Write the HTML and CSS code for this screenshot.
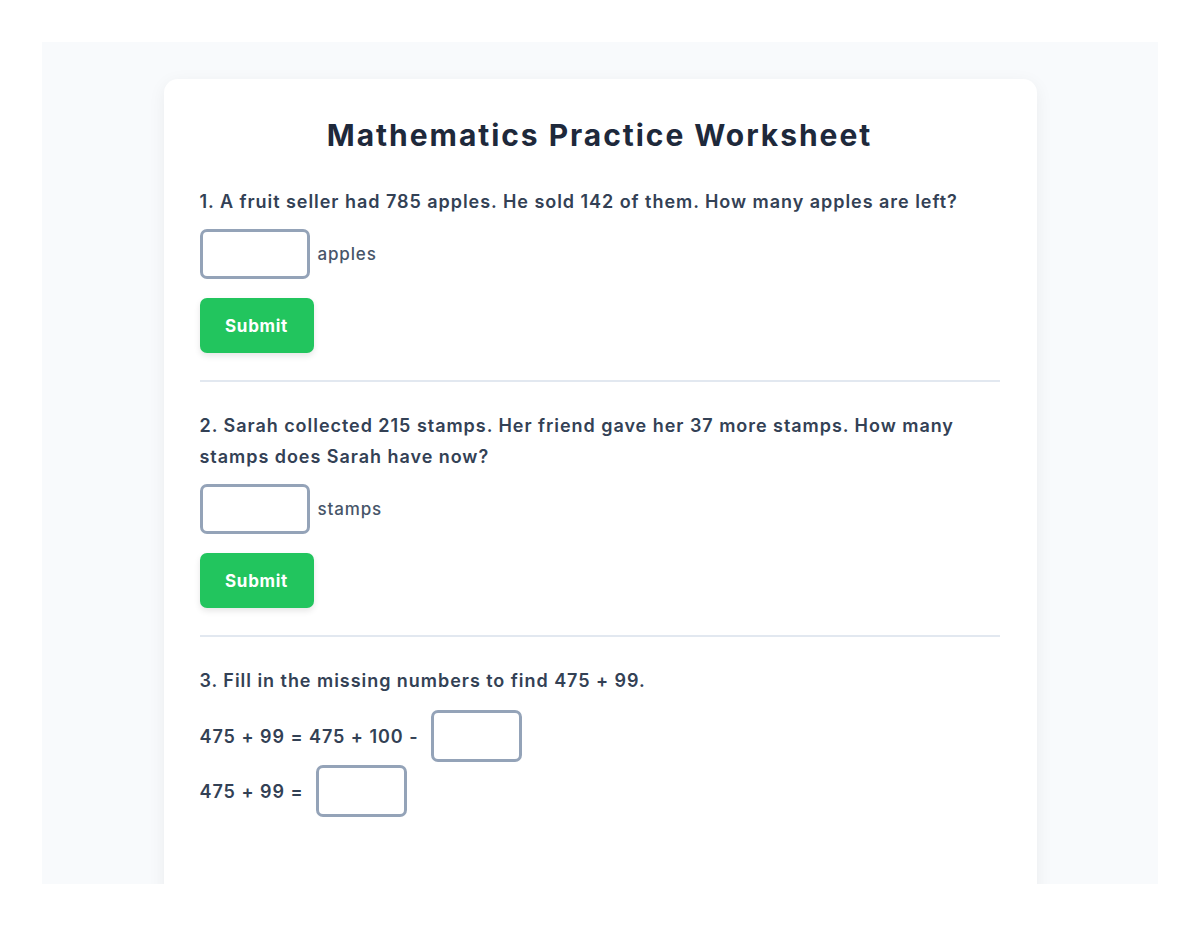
FILE: index.html
```html
<!DOCTYPE html>
<html lang="en">
<head>
  <meta charset="UTF-8">
  <meta name="viewport" content="width=device-width, initial-scale=1.0"/>
  <title>Mathematics Practice Worksheet</title>
  <link rel="stylesheet" href="styles.css">
</head>
<body>
  <div class="frame">
    <main class="worksheet">
      <h1>Mathematics Practice Worksheet</h1>

      <!-- Question 1 -->
      <section class="question">
        <p class="prompt">1. A fruit seller had 785 apples. He sold 142 of them. How many apples are left?</p>
        <div class="answer-row">
          <input type="text" class="answer">
          <span class="unit">apples</span>
        </div>
        <button class="btn-submit">Submit</button>
      </section>

      <!-- Question 2 -->
      <section class="question">
        <p class="prompt">2. Sarah collected 215 stamps. Her friend gave her 37 more stamps. How many stamps does Sarah have now?</p>
        <div class="answer-row">
          <input type="text" class="answer">
          <span class="unit">stamps</span>
        </div>
        <button class="btn-submit">Submit</button>
      </section>

      <!-- Question 3 -->
      <section class="question last">
        <p class="prompt">3. Fill in the missing numbers to find 475 + 99.</p>
        <div class="equation">
          <span>475 + 99 = 475 + 100 -</span>
          <input type="text" class="blank">
        </div>
        <div class="equation">
          <span>475 + 99 =</span>
          <input type="text" class="blank">
        </div>
      </section>
    </main>
  </div>
</body>
</html>
```

FILE: styles.css
```css
/* --- Vars and reset --- */
:root {
  --bg: #f8fafc;
  --title: #1e293b;
  --text: #334155;
  --muted: #475569;
  --border: #94a3b8;
  --divider: #e2e8f0;
  --green: #22c55e;
  --font: 'Inter', 'Noto Sans', sans-serif;
}
* { box-sizing: border-box; margin: 0; padding: 0; }
body { font-family: var(--font); background: white; color: var(--text); letter-spacing: 0.06em; }

/* --- Frame --- */
.frame {
  margin: 42px;
  height: 842px;
  overflow: hidden;
  background: var(--bg);
  padding-top: 37px;
}

/* --- Card --- */
.worksheet {
  width: 873px;
  min-height: 900px;
  margin: 0 auto;
  background: white;
  border-radius: 14px;
  box-shadow: 0 4px 18px rgba(15, 23, 42, 0.06);
  padding: 36px 37px 0 36px;
}
.worksheet h1 {
  text-align: center;
  font-size: 30px;
  font-weight: 700;
  letter-spacing: 0.065em;
  color: var(--title);
  line-height: 40px;
  margin-bottom: 31px;
}

/* --- Questions --- */
.question {
  border-bottom: 2px solid var(--divider);
  padding-bottom: 27px;
  margin-bottom: 28px;
}
.question.last { border-bottom: none; }
.prompt {
  font-size: 18px;
  font-weight: 600;
  line-height: 31px;
  margin-bottom: 12px;
}
.question.last .prompt { margin-bottom: 14px; }
.answer-row { display: flex; align-items: center; gap: 8px; margin-bottom: 19px; }
.answer {
  width: 110px;
  height: 50px;
  border: 3px solid var(--border);
  border-radius: 7px;
  background: white;
}
.unit { font-size: 17px; font-weight: 500; color: var(--muted); letter-spacing: 0.05em; }

.btn-submit {
  width: 114px;
  height: 55px;
  border: none;
  border-radius: 7px;
  background: var(--green);
  color: white;
  font-family: var(--font);
  font-size: 17px;
  font-weight: 700;
  letter-spacing: 0.04em;
  box-shadow: 0 3px 6px rgba(0, 0, 0, 0.1);
  cursor: pointer;
}

/* --- Equations --- */
.equation {
  display: flex;
  align-items: center;
  gap: 13px;
  font-size: 18px;
  font-weight: 600;
  margin-bottom: 3px;
}
.blank {
  width: 91px;
  height: 52px;
  border: 3px solid var(--border);
  border-radius: 7px;
  background: white;
}
```
